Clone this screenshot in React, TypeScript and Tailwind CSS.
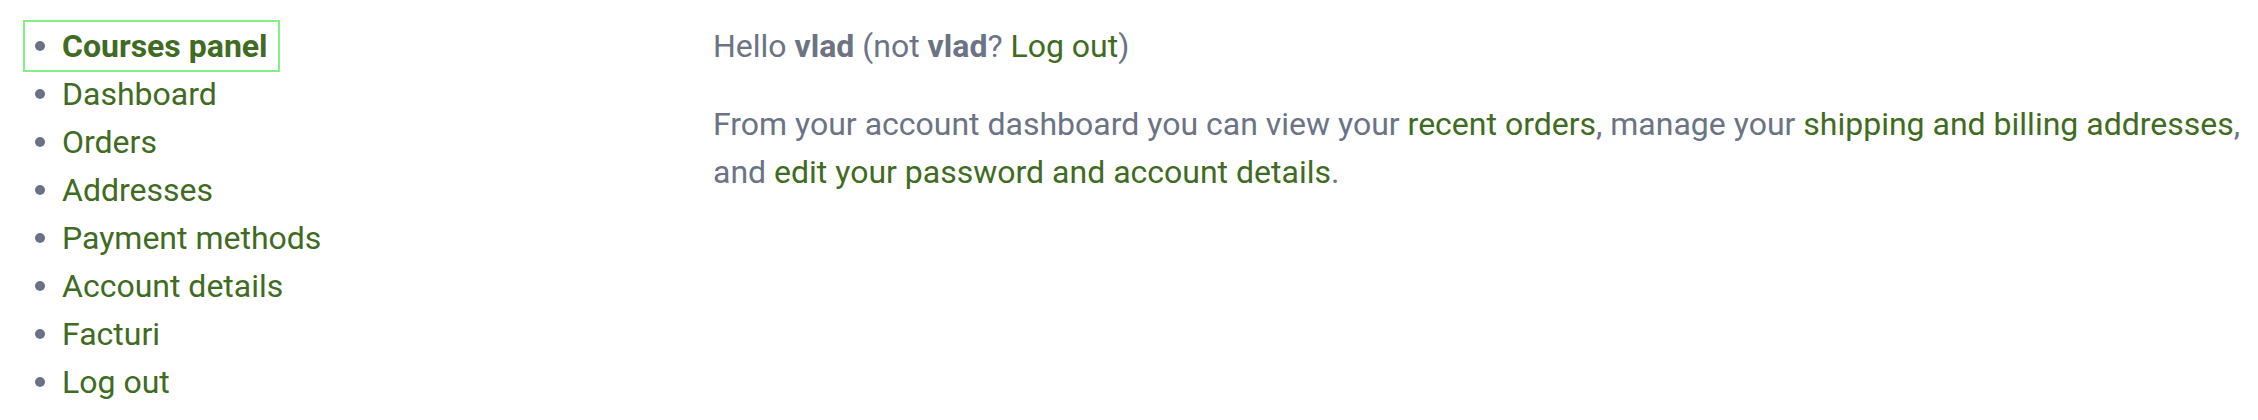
const links = [
  "Courses panel",
  "Dashboard",
  "Orders",
  "Addresses",
  "Payment methods",
  "Account details",
  "Facturi",
  "Log out",
];

export default function App() {
  return (
    <div
      className="grid h-[420px] w-[2258px] grid-cols-[713px_1fr] bg-white text-[#6b7385]"
      style={{ fontFamily: "Roboto, 'Liberation Sans', sans-serif" }}
    >
      <nav className="pl-[25px] pt-[22px]">
        <ul className="flex flex-col items-start">
          {links.map((label, i) => (
            <li
              key={label}
              className={
                i === 0
                  ? "flex h-[48px] items-center gap-[17px] pl-[10px] pr-[10px] outline-2 outline-[#82f082]"
                  : "flex h-[48px] items-center gap-[17px] pl-[10px]"
              }
            >
              <span className="h-[10px] w-[10px] shrink-0 rounded-full bg-[#6b7385]" />
              <a
                href="#"
                className={
                  i === 0
                    ? "text-[32px] font-bold leading-[48px] text-[#3f6b22]"
                    : "text-[32px] leading-[48px] text-[#3f6b22]"
                }
              >
                {label}
              </a>
            </li>
          ))}
        </ul>
      </nav>

      <main className="pt-[22px] pr-[12px] text-[32px] leading-[48px]">
        <p>
          Hello <strong className="font-bold">vlad</strong> (not{" "}
          <strong className="font-bold">vlad</strong>?{" "}
          <a href="#" className="text-[#3f6b22]">
            Log out
          </a>
          )
        </p>
        <p className="mt-[30px]">
          From your account dashboard you can view your{" "}
          <a href="#" className="text-[#3f6b22]">
            recent orders
          </a>
          , manage your{" "}
          <a href="#" className="text-[#3f6b22]">
            shipping and billing addresses
          </a>
          , and{" "}
          <a href="#" className="text-[#3f6b22]">
            edit your password and account details
          </a>
          .
        </p>
      </main>
    </div>
  );
}
